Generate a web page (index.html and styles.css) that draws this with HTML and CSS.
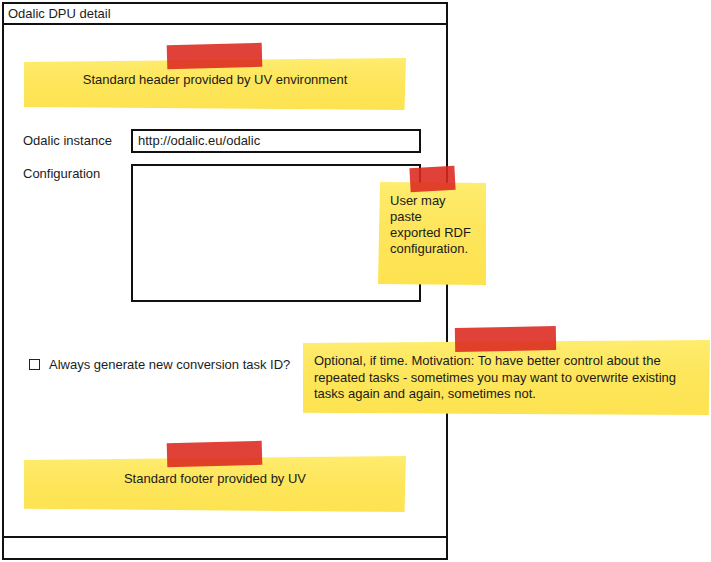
FILE: index.html
```html
<!doctype html>
<html lang="en">
  <head>
    <meta charset="UTF-8" />
    <title>Odalic DPU detail</title>
    <link rel="stylesheet" href="styles.css">
  </head>
  <body>
    <div class="canvas">
      <div class="window">
        <div class="titleBar">Odalic DPU detail</div>

        <div class="content">
          <div class="note noteWide">
            <span class="tape tapeWide"></span>
            <span class="noteText">Standard header provided by UV environment</span>
          </div>

          <div class="form">
            <div class="formRow">
              <label class="formLabel">Odalic instance</label>
              <div class="input">http://odalic.eu/odalic</div>
            </div>
            <div class="formRow">
              <label class="formLabel">Configuration</label>
              <div class="textarea"></div>
            </div>
          </div>

          <div class="checkRow">
            <span class="checkbox"></span>
            <span>Always generate new conversion task ID?</span>
          </div>

          <div class="note noteWide noteFooter">
            <span class="tape tapeWide"></span>
            <span class="noteText">Standard footer provided by UV</span>
          </div>
        </div>

        <div class="statusBar"></div>
      </div>

      <div class="note stickyConfig">
        <span class="tape tapeSmall"></span>
        <span class="noteText">User may<br>paste<br>exported RDF<br>configuration.</span>
      </div>

      <div class="note stickyOptional">
        <span class="tape tapeOptional"></span>
        <span class="noteText">Optional, if time. Motivation: To have better control about the
        repeated tasks - sometimes you may want to overwrite existing
        tasks again and again, sometimes not.</span>
      </div>
    </div>
  </body>
</html>
```
FILE: styles.css
```css
body {
  margin: 0;
  background: #fff;
  font-family: 'Liberation Sans', Arial, sans-serif;
  font-size: 13px;
  color: #1c1c1c;
}

.canvas {
  position: relative;
  width: 711px;
  height: 562px;
}

.window {
  box-sizing: border-box;
  margin: 2px 0 0 2px;
  width: 446px;
  height: 558px;
  border: 2px solid #111;
  display: flex;
  flex-direction: column;
}

.titleBar {
  height: 19px;
  line-height: 20px;
  padding-left: 4px;
  border-bottom: 2px solid #111;
}

.content {
  flex: 1;
  padding: 33px 0 0 20px;
}

.statusBar {
  height: 20px;
  border-top: 2px solid #111;
}

/* sticky notes: paper is drawn by ::before so the tape is not clipped */
.note {
  position: relative;
  box-sizing: border-box;
  color: #1a1a1a;
}

.note::before {
  content: "";
  position: absolute;
  inset: 0;
  background: linear-gradient(180deg, #ffec6e 0%, #fde65c 45%, #fde350 100%);
  clip-path: polygon(0 3px, 100% 0, 99.7% 100%, 0 97%);
}

.noteText {
  position: relative;
}

.noteWide {
  width: 382px;
  height: 52px;
  padding-top: 14px;
  text-align: center;
}

.noteWide::before {
  clip-path: polygon(0 4px, 100% 0, 99.6% 100%, 0 94%);
}

.noteFooter {
  margin-top: 86px;
  height: 56px;
  padding-top: 15px;
}

.tape {
  position: absolute;
  background: rgba(220, 40, 30, 0.88);
  z-index: 2;
}

.tapeWide {
  left: 143px;
  top: -14px;
  width: 95px;
  height: 24px;
  transform: rotate(-1.5deg);
}

.stickyConfig {
  position: absolute;
  left: 378px;
  top: 180px;
  width: 108px;
  height: 103px;
  padding: 11px 0 0 12px;
  line-height: 16px;
}

.stickyConfig::before {
  clip-path: polygon(2px 0, 100% 1px, 100% 100%, 0 99%);
}

.tapeSmall {
  left: 32px;
  top: -15px;
  width: 45px;
  height: 24px;
  transform: rotate(-3deg);
}

.stickyOptional {
  position: absolute;
  left: 303px;
  top: 338px;
  width: 407px;
  height: 75px;
  padding: 13px 10px 0 11px;
  line-height: 16.5px;
}

.tapeOptional {
  left: 152px;
  top: -13px;
  width: 101px;
  height: 24px;
  transform: rotate(-1deg);
}

/* form */
.form {
  margin: 19px 0 0 -1px;
  display: flex;
  flex-direction: column;
  gap: 11px;
}

.formRow {
  display: flex;
  align-items: flex-start;
}

.formLabel {
  width: 108px;
  padding-top: 2px;
}

.formRow:first-child .formLabel {
  padding-top: 4px;
}

.input {
  box-sizing: border-box;
  width: 290px;
  height: 24px;
  border: 2px solid #111;
  padding: 2px 0 0 5px;
}

.textarea {
  box-sizing: border-box;
  width: 290px;
  height: 138px;
  border: 2px solid #111;
}

.checkRow {
  margin-top: 56px;
  padding-left: 5px;
  display: flex;
  align-items: center;
  gap: 9px;
  height: 12px;
}

.checkbox {
  box-sizing: border-box;
  width: 11px;
  height: 11px;
  border: 1px solid #222;
}
```
